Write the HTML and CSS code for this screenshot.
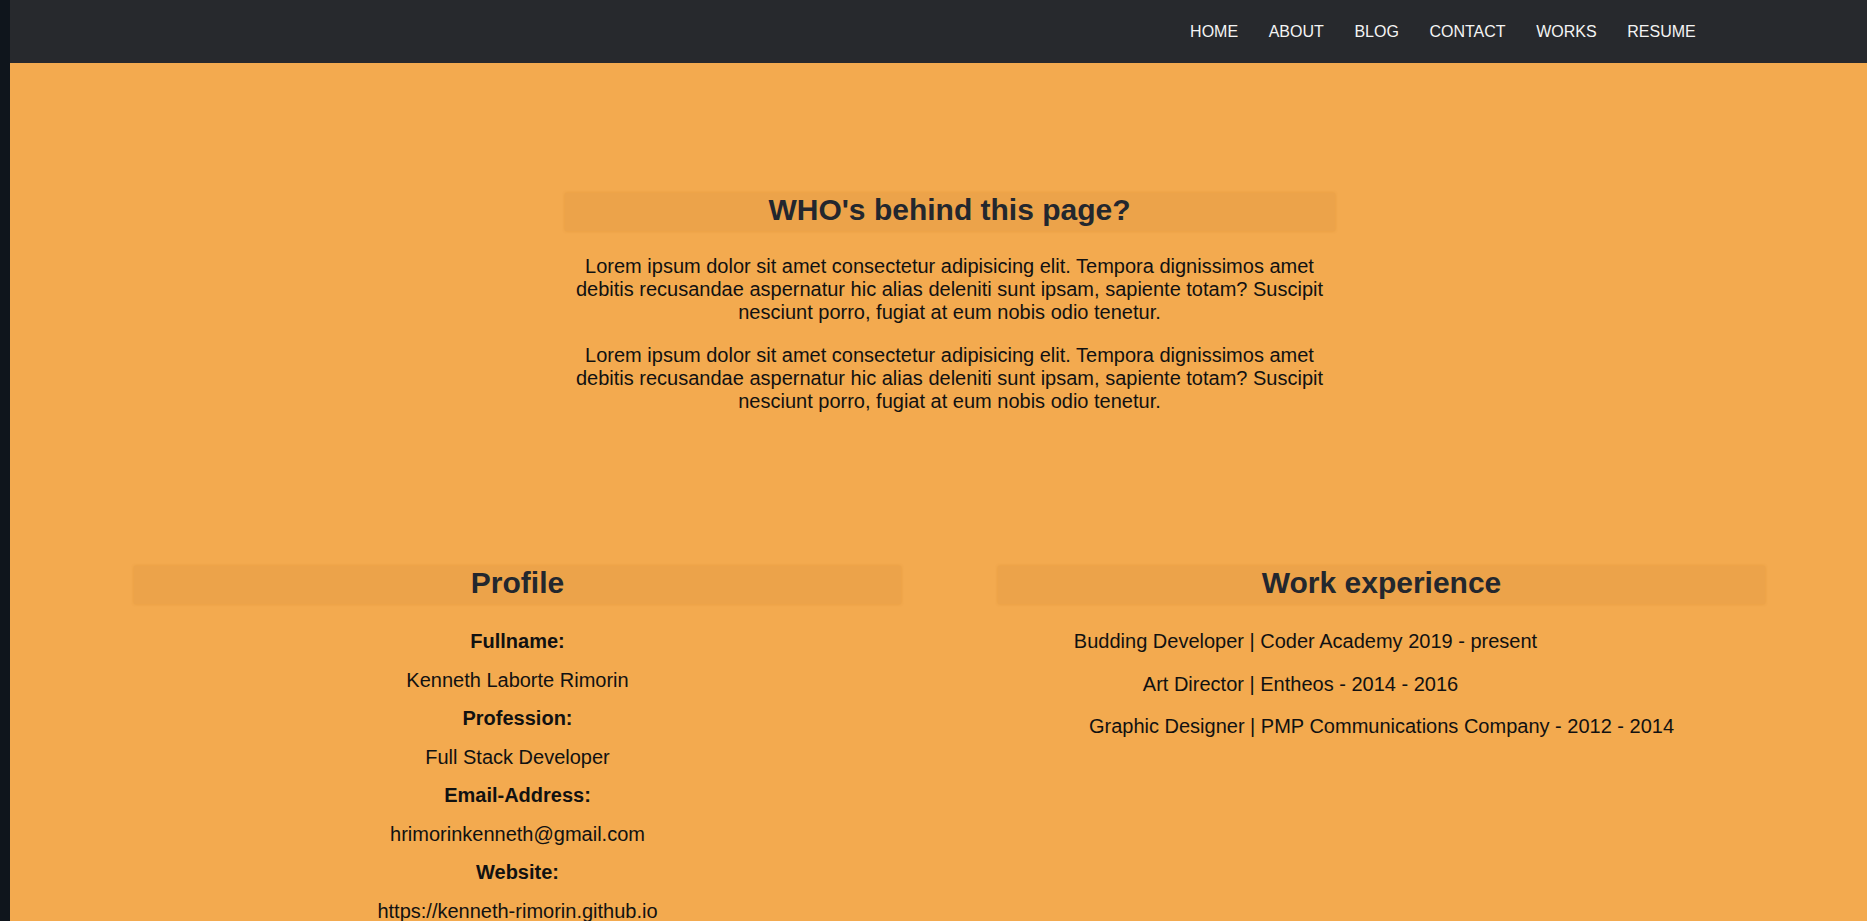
FILE: index.html
```html
<!DOCTYPE html>
<html lang="en">
<head>
<meta charset="utf-8">
<title>About</title>
<link rel="stylesheet" href="styles.css">
</head>
<body>
<div class="page">
  <aside class="rail"></aside>
  <div class="main">
    <header class="nav">
      <ul class="nav__list">
        <li class="nav__item">HOME</li>
        <li class="nav__item">ABOUT</li>
        <li class="nav__item">BLOG</li>
        <li class="nav__item">CONTACT</li>
        <li class="nav__item">WORKS</li>
        <li class="nav__item">RESUME</li>
      </ul>
    </header>
    <div class="content">
      <section class="about">
        <h2 class="title">WHO's behind this page?</h2>
        <p class="about__text">Lorem ipsum dolor sit amet consectetur adipisicing elit. Tempora dignissimos amet debitis recusandae aspernatur hic alias deleniti sunt ipsam, sapiente totam? Suscipit nesciunt porro, fugiat at eum nobis odio tenetur.</p>
        <p class="about__text">Lorem ipsum dolor sit amet consectetur adipisicing elit. Tempora dignissimos amet debitis recusandae aspernatur hic alias deleniti sunt ipsam, sapiente totam? Suscipit nesciunt porro, fugiat at eum nobis odio tenetur.</p>
      </section>
      <section class="details">
        <div class="col">
          <h2 class="title title--col">Profile</h2>
          <dl class="profile">
            <dt class="profile__label">Fullname:</dt>
            <dd class="profile__value">Kenneth Laborte Rimorin</dd>
            <dt class="profile__label">Profession:</dt>
            <dd class="profile__value">Full Stack Developer</dd>
            <dt class="profile__label">Email-Address:</dt>
            <dd class="profile__value">hrimorinkenneth@gmail.com</dd>
            <dt class="profile__label">Website:</dt>
            <dd class="profile__value">https://kenneth-rimorin.github.io</dd>
          </dl>
        </div>
        <div class="col">
          <h2 class="title title--col">Work experience</h2>
          <ul class="jobs">
            <li class="job job--a">Budding Developer | Coder Academy 2019 - present</li>
            <li class="job job--b">Art Director | Entheos - 2014 - 2016</li>
            <li class="job">Graphic Designer | PMP Communications Company - 2012 - 2014</li>
          </ul>
        </div>
      </section>
    </div>
  </div>
</div>
</body>
</html>
```
FILE: styles.css
```css
* { box-sizing: border-box; }

html, body {
  margin: 0;
  padding: 0;
}

body {
  background: #f3aa4f;
  font-family: "Liberation Sans", Arial, sans-serif;
  color: #111;
}

.page {
  display: flex;
  height: 100vh;
  overflow: hidden;
}

.rail {
  flex: 0 0 10px;
  background: #0f151c;
}

.main {
  flex: 1;
  min-width: 0;
}

.nav {
  height: 63px;
  background: #27292d;
  display: flex;
  align-items: center;
  justify-content: flex-end;
  padding-right: 156px;
}

.nav__list {
  display: flex;
  list-style: none;
  margin: 0;
  padding: 0;
}

.nav__item {
  padding: 0 15.3px;
  color: #f4f4f4;
  font-size: 16px;
  line-height: 18px;
}

.content {
  padding-left: 22px;
}

.about {
  width: 770px;
  margin: 0 auto;
  padding-top: 130px;
  text-align: center;
}

.title {
  margin: 0 0 24px;
  padding-bottom: 4px;
  font-size: 30px;
  font-weight: bold;
  text-align: center;
  color: #23272e;
  background: #eca34a;
  box-shadow: 0 0 3px rgba(190, 110, 20, 0.25);
}

.about__text {
  margin: 0 0 20px;
  font-size: 20px;
  line-height: 23px;
  color: #111;
}

.about__text:last-child {
  margin-bottom: 0;
}

.details {
  display: grid;
  grid-template-columns: 767px 767px;
  column-gap: 97px;
  justify-content: center;
  padding-top: 153px;
}

.title--col {
  margin-bottom: 26px;
}

.profile {
  margin: 0;
  text-align: center;
  font-size: 20px;
  line-height: 23px;
}

.profile__label,
.profile__value {
  margin: 0 0 15.5px;
}

.profile__label {
  font-weight: bold;
}

.jobs {
  list-style: none;
  margin: 0;
  padding: 0;
  font-size: 20px;
  line-height: 23px;
  text-align: center;
}

.job {
  margin: 0 0 19.5px;
}

.job--a {
  padding-right: 152px;
}

.job--b {
  padding-right: 162px;
}
```
